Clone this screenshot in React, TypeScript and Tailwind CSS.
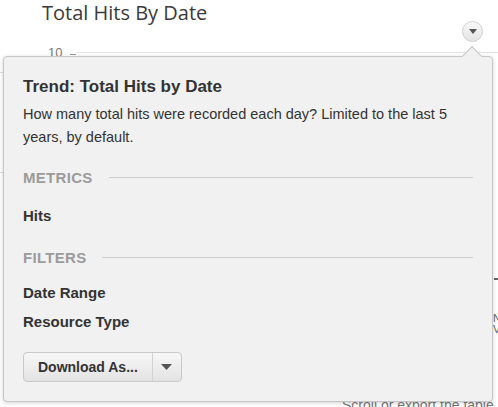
function SectionHeading({ label }: { label: string }) {
  return (
    <div className="flex items-center gap-4">
      <span className="text-[15px] font-bold tracking-[0.3px] text-[#9b9b9b] leading-none">{label}</span>
      <div className="h-px flex-1 bg-[#cfcfcf]"></div>
    </div>
  );
}

export default function App() {
  return (
    <div
      className="relative w-[498px] h-[407px] overflow-hidden bg-white"
      style={{ fontFamily: '"Liberation Sans", Arial, sans-serif' }}
    >
      {/* Chart card behind the popover */}
      <div className="flex flex-col">
        <h2
          className="pl-[42px] h-[44px] text-[20px] leading-[26px] text-[#3a3a3a]"
          style={{ fontFamily: '"Open Sans", sans-serif' }}
        >
          Total Hits By Date
        </h2>
        <div className="flex items-start h-[20px]">
          <span className="pl-[48px] w-[70px] text-[13px] text-[#777] leading-[18px]">10</span>
          <div className="w-[6px] h-px bg-[#999] mt-[10px]"></div>
          <div className="flex-1 h-px bg-[#e2e2e2] mt-[8px]"></div>
        </div>
        <div className="h-[334px]"></div>
        <p className="pl-[342px] text-[14px] text-[#777] leading-none whitespace-nowrap">
          Scroll or export the table
        </p>
      </div>

      {/* Chart menu toggle */}
      <button className="absolute left-[462px] top-[21px] w-[21px] h-[21px] rounded-full border border-[#d0d0d0] bg-gradient-to-b from-[#f8f8f8] to-[#e4e4e4] flex items-center justify-center">
        <svg width="8" height="5" viewBox="0 0 8 5">
          <path d="M0 0 L8 0 L4 5 Z" fill="#555" />
        </svg>
      </button>

      {/* Fragments of the page peeking out on the right */}
      <div className="absolute left-[494px] top-[278px] w-[4px] h-[2px] bg-[#666]"></div>
      <div className="absolute left-[493px] top-[313px] text-[11px] leading-[11px] text-[#666]">N<br />V</div>
      <div className="absolute left-[0px] top-[72px] w-[4px] h-px bg-[#ddd]"></div>
      <div className="absolute left-[0px] top-[172px] w-[4px] h-px bg-[#ddd]"></div>

      {/* Popover */}
      <div className="absolute left-[3px] top-[56px] w-[490px] h-[346px] rounded-[4px] border border-[#c6c6c6] bg-[#f1f1f1] shadow-[0_1px_4px_rgba(0,0,0,0.18)]">
        <div className="absolute -top-[8px] left-[461px] w-[14px] h-[14px] rotate-45 border-l border-t border-[#c6c6c6] bg-[#f1f1f1]"></div>
        <div className="px-[19px] pt-[20px]">
          <h3 className="text-[17px] font-bold text-[#333] leading-[20px]">Trend: Total Hits by Date</h3>
          <p className="mt-[6px] text-[14.5px] leading-[23px] text-[#333]">
            How many total hits were recorded each day? Limited to the last 5 years, by default.
          </p>

          <div className="mt-[21px]">
            <SectionHeading label="METRICS" />
          </div>
          <div className="mt-[23px] text-[15px] font-bold text-[#333] leading-none">Hits</div>

          <div className="mt-[27px]">
            <SectionHeading label="FILTERS" />
          </div>
          <div className="mt-[22px] flex flex-col gap-[18px] text-[15px] font-bold text-[#333] leading-[11px]">
            <div>Date Range</div>
            <div>Resource Type</div>
          </div>

          <div className="mt-[25px] inline-flex h-[30px] rounded-[4px] border border-[#c9c9c9] bg-gradient-to-b from-[#f7f7f7] to-[#e3e3e3] text-[14px] font-bold text-[#333]">
            <span className="flex items-center px-[14px] border-r border-[#d2d2d2]">Download As...</span>
            <span className="flex items-center justify-center w-[28px]">
              <svg width="11" height="6" viewBox="0 0 11 6">
                <path d="M0 0 L11 0 L5.5 6 Z" fill="#555" />
              </svg>
            </span>
          </div>
        </div>
      </div>
    </div>
  );
}
